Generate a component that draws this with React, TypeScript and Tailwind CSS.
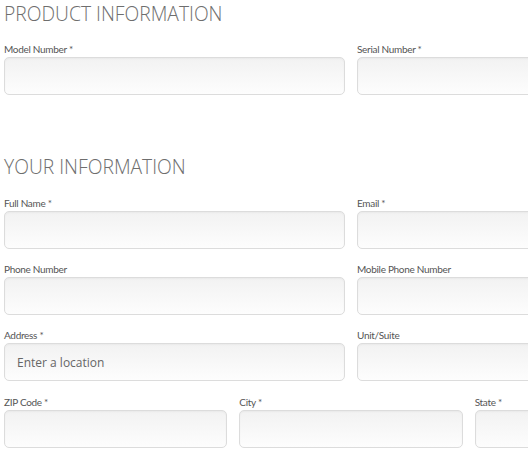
import React from 'react'

type Field = { label: string; placeholder?: string }

function Input({ label, placeholder }: Field) {
  return (
    <div className="flex flex-col min-w-0">
      <label className="text-[10px] leading-4 tracking-[-0.3px] text-[#555] font-['Lato',sans-serif]">{label}</label>
      <input
        type="text"
        placeholder={placeholder}
        className="h-[38px] w-full rounded-[5px] border border-[#dcdcdc] bg-gradient-to-b from-[#f2f2f2] to-[#fdfdfd] px-3 text-xs text-[#555] placeholder:text-[#666] font-['Open_Sans',sans-serif] shadow-[inset_0_1px_2px_rgba(0,0,0,0.04)] outline-none"
      />
    </div>
  )
}

function Heading({ children }: { children: React.ReactNode }) {
  return (
    <h2 className="text-[19.3px] leading-7 font-light text-[#6e6e6e] font-['Open_Sans',sans-serif]">
      {children}
    </h2>
  )
}

export default function App() {
  return (
    <div className="h-[459px] w-[528px] overflow-hidden bg-white">
      <div className="w-[698px] pl-1">
        <Heading>PRODUCT INFORMATION</Heading>
        <div className="mt-[13px] grid grid-cols-2 gap-x-3">
          <Input label="Model Number *" />
          <Input label="Serial Number *" />
        </div>

        <div className="mt-[58px]">
          <Heading>YOUR INFORMATION</Heading>
        </div>
        <div className="mt-[14px] grid grid-cols-2 gap-x-3 gap-y-3">
          <Input label="Full Name *" />
          <Input label="Email *" />
          <Input label="Phone Number" />
          <Input label="Mobile Phone Number" />
          <Input label="Address *" placeholder="Enter a location" />
          <Input label="Unit/Suite" />
        </div>
        <div className="mt-[13px] grid grid-cols-3 gap-x-3">
          <Input label="ZIP Code *" />
          <Input label="City *" />
          <Input label="State *" />
        </div>
      </div>
    </div>
  )
}
